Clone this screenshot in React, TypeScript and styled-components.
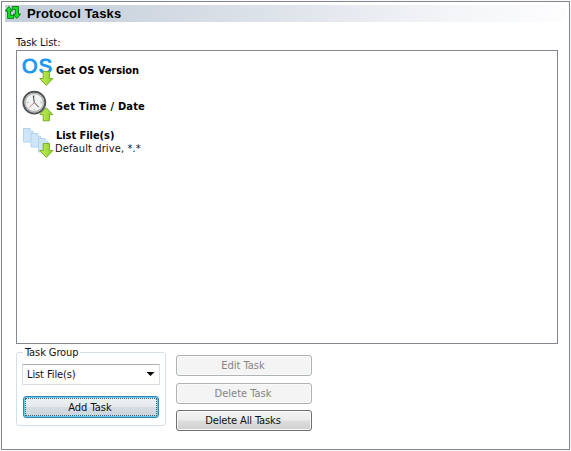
import React from "react";
import styled, { createGlobalStyle } from "styled-components";

const Global = createGlobalStyle`
  * { box-sizing: border-box; }
  html, body { margin: 0; background: #fff; overflow: hidden; }
  body { font: 11px/13px "DejaVu Sans Condensed", "DejaVu Sans", sans-serif; color: #111; }
  svg { display: block; }
`;

const Page = styled.div`
  width: 571px;
  height: 451px;
  padding: 1px;
  background: #f8f9fa;
`;

const Panel = styled.main`
  width: 569px;
  height: 449px;
  border: 1px solid #86878c;
  background: #fff;
  padding: 3px;
`;

const Header = styled.header`
  height: 17px;
  display: flex;
  align-items: center;
  gap: 5px;
  background: linear-gradient(90deg, #c4cedb 0, #cdd5df 20%, #dfe4eb 50%, #f3f5f8 80%, #fdfdfe 100%);
`;

const Title = styled.h1`
  margin: 0;
  font: bold 13px/17px "Liberation Sans", Arial, sans-serif;
  color: #000;
  letter-spacing: 0.15px;
`;

const Body = styled.div`
  padding: 14px 0 0 11px;
`;

const Label = styled.span<{ $track?: number }>`
  display: block;
  white-space: nowrap;
  letter-spacing: ${(p) => p.$track ?? 0}px;
`;

const TaskList = styled.ul`
  width: 542px;
  height: 294px;
  margin: 1px 0 0;
  padding: 1px 0 0 5px;
  border: 1px solid #828790;
  list-style: none;
`;

const TaskRow = styled.li`
  height: 36px;
  display: flex;
  align-items: center;
  gap: 2px;
`;

const TaskName = styled(Label)`
  font-weight: bold;
  color: #000;
`;

const Detail = styled(Label)`
  margin-left: -1px;
`;

const Controls = styled.div`
  display: flex;
  align-items: flex-start;
  gap: 10px;
`;

const Group = styled.fieldset`
  width: 150px;
  height: 80px;
  margin: 2px 0 0;
  padding: 5px 0 0 5px;
  border: 1px solid #d5dfe5;
  border-radius: 3px;
  min-width: 0;
`;

const Legend = styled.legend`
  margin-left: 1px;
  padding: 0 2px;
`;

const Combo = styled.div`
  width: 138px;
  height: 21px;
  padding: 0 4px;
  border: 1px solid #d9dee4;
  border-top-color: #abadb3;
  border-radius: 1px;
  display: flex;
  align-items: center;
  justify-content: space-between;
`;

const Button = styled.button`
  width: 136px;
  height: 21px;
  padding: 0 2px 0 0;
  border: 1px solid #707070;
  border-radius: 3px;
  display: flex;
  align-items: center;
  justify-content: center;
  font: inherit;
  color: #111;
  background: linear-gradient(#f2f2f2 0, #ebebeb 48%, #dddddd 52%, #cfcfcf 100%);
  box-shadow: inset 0 0 0 1px #fafafa;

  &:disabled {
    border-color: #adb2b5;
    background: #f4f4f4;
    color: #838383;
  }
`;

const FocusButton = styled(Button)`
  position: relative;
  height: 22px;
  margin: 11px 0 0 1px;
  border-color: #3c7fb1;
  background: linear-gradient(#eef1f4 0, #e6eaee 48%, #d6dce2 52%, #ccd4da 100%);
  box-shadow: inset 0 0 0 1px #5fcdee;

  &::before {
    content: "";
    position: absolute;
    inset: 1px;
    border: 1px dotted #3a6272;
  }
`;

const Actions = styled.div`
  padding-top: 11px;
  display: flex;
  flex-direction: column;
  gap: 7px;

  & > :last-child { margin-top: -1px; }
`;

const Arrow = ({ up = false }: { up?: boolean }) => (
  <path
    d={
      up
        ? "M24.3 17.8L30.8 24.6h-3.4v6.2h-6.2v-6.2h-3.4z"
        : "M21.2 17.5h6.2v7h3.4L24.3 31.5l-6.5-7h3.4z"
    }
    fill="url(#leaf)"
    stroke="#78ae28"
    strokeWidth="1"
    strokeLinejoin="round"
  />
);

const OsIcon = () => (
  <svg width="32" height="32" viewBox="0 0 32 32">
    <defs>
      <linearGradient id="leaf" x1="0" x2="1">
        <stop offset="0" stopColor="#c8ee62" />
        <stop offset="1" stopColor="#8cd01f" />
      </linearGradient>
    </defs>
    <g fontFamily="Liberation Sans" fontSize="20" fill="#2196ef" stroke="#2196ef" strokeWidth="1">
      <text x="0" y="18.7">O</text>
      <text x="16.7" y="18.7">S</text>
    </g>
    <Arrow />
  </svg>
);

const ClockIcon = () => (
  <svg width="32" height="32" viewBox="0 0 32 32">
    <circle cx="12.3" cy="12.6" r="10.9" fill="#f2f3f3" stroke="#515254" strokeWidth="2" />
    <circle cx="12.3" cy="12.6" r="9.2" fill="none" stroke="#b5b7b9" strokeWidth="1.5" />
    <path d="M12.3 5.3v1.6M12.3 18.8v1.6M4.8 12.6h1.6M18.3 12.6h1.6" stroke="#aaa" />
    <path d="M11.3 5.6l1 7 4.6 4.7" fill="none" stroke="#444" strokeWidth="1" />
    <path d="M12.3 12.6l-5 4.8" stroke="#d36b69" strokeWidth=".9" />
    <Arrow up />
  </svg>
);

const FilesIcon = () => (
  <svg width="32" height="32" viewBox="0 0 32 32">
    <g fill="#cfe6f8" stroke="#a5cdea" strokeWidth=".8">
      <path d="M1.5 2.5H8l3 3V16H1.5z" />
      <path d="M9 7.5h6.5l3 3V21H9z" />
      <path d="M16.5 12.5H23l3 3V26h-9.5z" />
    </g>
    <path d="M8 2.5v3h3M15.5 7.5v3h3M23 12.5v3h3" fill="#f5fbff" stroke="#a5cdea" strokeWidth=".7" />
    <Arrow />
  </svg>
);

const SyncIcon = () => (
  <svg width="17" height="17" viewBox="0 0 17 17">
    <g fill="#14e322" stroke="#08700f" strokeWidth="0.9" strokeLinejoin="miter">
      <path d="M3.8 1.5L7.5 6H5.6v4.4h3.2v3H2.6V6H.4z" />
      <path d="M7.4 1.5h6V9h2.2l-3.7 4.5L8.2 9h2.2V4.4h-3z" />
    </g>
  </svg>
);

const tasks = [
  { name: "Get OS Version", track: -0.05, icon: <OsIcon /> },
  { name: "Set Time / Date", track: 0.2, icon: <ClockIcon /> },
  { name: "List File(s)", track: -0.05, detail: "Default drive, *.*", icon: <FilesIcon /> },
];

export default function App() {
  return (
    <Page>
      <Global />
      <Panel>
        <Header>
          <SyncIcon />
          <Title>Protocol Tasks</Title>
        </Header>
        <Body>
          <Label $track={-0.05}>Task List:</Label>
          <TaskList>
            {tasks.map((t) => (
              <TaskRow key={t.name}>
                {t.icon}
                <div>
                  <TaskName $track={t.track}>{t.name}</TaskName>
                  {t.detail && <Detail $track={0.12}>{t.detail}</Detail>}
                </div>
              </TaskRow>
            ))}
          </TaskList>
          <Controls>
            <Group>
              <Legend><Label $track={-0.1}>Task Group</Label></Legend>
              <Combo>
                <Label $track={-0.1}>List File(s)</Label>
                <svg width="9" height="5" viewBox="0 0 9 5"><path d="M.5 0h8l-4 4z" fill="#000" /></svg>
              </Combo>
              <FocusButton><Label>Add Task</Label></FocusButton>
            </Group>
            <Actions>
              <Button disabled><Label>Edit Task</Label></Button>
              <Button disabled><Label>Delete Task</Label></Button>
              <Button><Label $track={-0.12}>Delete All Tasks</Label></Button>
            </Actions>
          </Controls>
        </Body>
      </Panel>
    </Page>
  );
}
